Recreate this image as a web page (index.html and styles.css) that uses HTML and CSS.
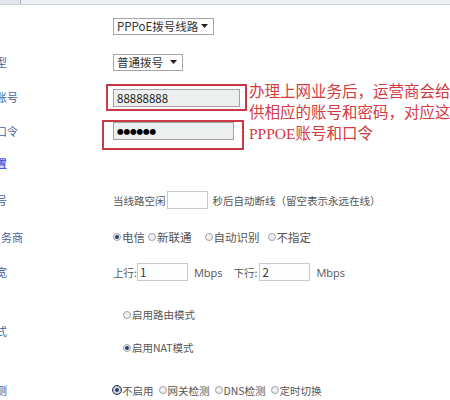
FILE: index.html
```html
<!DOCTYPE html>
<html>
<head>
<meta charset="utf-8">
<link rel="stylesheet" href="styles.css">
</head>
<body>
<div class="tabs"><div class="tab"></div></div>
<div class="form">
  <div class="row r1">
    <div class="lab"></div>
    <div class="val"><span class="sel sel-line">PPPoE拨号线路<svg class="arr" width="7" height="4" viewBox="0 0 7 4"><path d="M0 0H7L3.5 4Z" fill="#222"/></svg></span></div>
  </div>
  <div class="row r2">
    <div class="lab">型</div>
    <div class="val"><span class="sel sel-mode">普通拨号<svg class="arr" width="7" height="4" viewBox="0 0 7 4"><path d="M0 0H7L3.5 4Z" fill="#222"/></svg></span></div>
  </div>
  <div class="row r3">
    <div class="lab">账号</div>
    <div class="val"><span class="inp inp-acc">88888888</span></div>
  </div>
  <div class="row r4">
    <div class="lab">口令</div>
    <div class="val"><span class="inp inp-pwd">●●●●●●</span></div>
  </div>
  <div class="row r5">
    <div class="lab head">置</div>
    <div class="val"></div>
  </div>
  <div class="row r6">
    <div class="lab">号</div>
    <div class="val txt">当线路空闲<span class="box box-idle"></span><span class="gap6">秒后自动断线（留空表示永远在线）</span></div>
  </div>
  <div class="row r7">
    <div class="lab lab-wide">务商</div>
    <div class="val txt isp">
      <span class="opt"><span class="rd on"></span>电信</span>
      <span class="opt o2"><span class="rd"></span>新联通</span>
      <span class="opt o3"><span class="rd"></span>自动识别</span>
      <span class="opt o4"><span class="rd"></span>不指定</span>
    </div>
  </div>
  <div class="row r8">
    <div class="lab">宽</div>
    <div class="val txt">上行:<span class="box box-bw">1</span><span class="unit">Mbps</span><span class="down">下行:</span><span class="box box-bw">2</span><span class="unit">Mbps</span></div>
  </div>
  <div class="row r9">
    <div class="lab">式</div>
    <div class="val txt modes">
      <div class="mline"><span class="rd"></span>启用路由模式</div>
      <div class="mline"><span class="rd on"></span>启用NAT模式</div>
    </div>
  </div>
  <div class="row r10">
    <div class="lab">测</div>
    <div class="val txt opts-tight">
      <span class="opt"><span class="rd on focus"></span>不启用</span>
      <span class="opt"><span class="rd"></span>网关检测</span>
      <span class="opt"><span class="rd"></span>DNS检测</span>
      <span class="opt"><span class="rd"></span>定时切换</span>
    </div>
  </div>
</div>

<div class="mark mark-acc"></div>
<div class="mark mark-pwd"></div>
<div class="note">
  <div>办理上网业务后，运营商会给</div>
  <div>供相应的账号和密码，对应这</div>
  <div>PPPOE账号和口令</div>
</div>
</body>
</html>
```

FILE: styles.css
```css
html, body {
  margin: 0;
  padding: 0;
  background: #fff;
  width: 450px;
  height: 400px;
  overflow: hidden;
  position: relative;
}

body {
  font-family: "Noto Sans CJK SC", "Noto Sans", sans-serif;
  color: #555;
}

.tabs {
  height: 4px;
  background: #eef0f3;
  border-bottom: 1px solid #cfd5dc;
}

.tab {
  width: 20px;
  height: 4px;
  background: #e2e6eb;
  border-right: 1px solid #aeb6c0;
}

.form {
  margin-top: 3px;
}

.row {
  display: grid;
  grid-template-columns: 113px 1fr;
  align-items: center;
}

.r1 { height: 35px; }
.r2 { height: 38px; }
.r3 { height: 32px; }
.r4 { height: 36px; }
.r5 { height: 28px; }
.r6 { height: 46px; }
.r7 { height: 28px; }
.r8 { height: 42px; }
.r9 { height: 76px; }
.r10 { height: 42px; }

.lab {
  overflow: hidden;
  white-space: nowrap;
  font-size: 11px;
  color: #4a5f98;
  text-indent: -4px;
}

.lab-wide {
  text-indent: 1px;
}

.lab.head {
  color: #4f5bd8;
  font-weight: bold;
}

.val {
  display: flex;
  align-items: center;
  white-space: nowrap;
}

.txt {
  font-size: 10.5px;
  color: #555;
}

.sel {
  display: inline-flex;
  align-items: center;
  justify-content: space-between;
  box-sizing: border-box;
  height: 17px;
  border: 1px solid #a5a5a5;
  background: #fff;
  padding: 0 5px 0 3px;
  font-size: 11.5px;
  color: #333;
  line-height: 15px;
}

.sel-line { width: 101px; margin-top: 1px; }
.sel-mode { width: 70px; }

.arr { flex: none; }

.inp {
  display: inline-flex;
  align-items: center;
  box-sizing: border-box;
  height: 18px;
  border: 1px solid #a0a4a8;
  background: #eef0f0;
  padding: 0 3px;
  font-size: 11.5px;
  color: #222;
}

.inp-acc { width: 127px; margin-top: 1px; }
.inp-pwd { width: 121px; font-size: 6.5px; color: #000; }

.box {
  display: inline-flex;
  align-items: center;
  box-sizing: border-box;
  height: 18px;
  border: 1px solid #c9c9c9;
  background: #fdfdfd;
  padding: 0 2px;
  font-size: 11.5px;
  color: #333;
}

.box-idle { width: 41px; margin-left: 1px; }
.box-bw { width: 51px; }

.gap6 { margin-left: 5px; }

.unit { margin-left: 6px; font-family: "Open Sans", "Noto Sans", sans-serif; font-size: 11px; }
.down { margin-left: 11px; margin-right: 2px; }

.isp { font-size: 11.5px; }
.o2 { margin-left: 3px; }
.o3 { margin-left: 13px; }
.o4 { margin-left: 8px; }

.opts-tight { gap: 5px; }

.opt {
  display: inline-flex;
  align-items: center;
}

.rd {
  flex: none;
  position: relative;
  box-sizing: border-box;
  width: 8px;
  height: 8px;
  border-radius: 50%;
  border: 1px solid #9ea3a8;
  background: #eef0f2;
  margin-right: 1px;
}

.rd.on::after {
  content: "";
  position: absolute;
  left: 1px;
  top: 1px;
  width: 4px;
  height: 4px;
  border-radius: 50%;
  background: #2a3c78;
}

.rd.focus {
  outline: 1px solid #2a3550;
  outline-offset: 0;
}

.modes {
  flex-direction: column;
  align-items: flex-start;
  padding-left: 10px;
}

.mline {
  height: 33px;
  display: flex;
  align-items: center;
}

.mark {
  position: absolute;
  border: 2px solid #c93a44;
  box-sizing: border-box;
}

.mark-acc { left: 106px; top: 84px; width: 141px; height: 27px; }
.mark-pwd { left: 102px; top: 120px; width: 142px; height: 30px; }

.note {
  position: absolute;
  left: 249px;
  top: 81px;
  white-space: nowrap;
  font-family: "Liberation Serif", "Noto Sans CJK SC", serif;
  font-size: 15.5px;
  line-height: 21px;
  color: #d43a40;
}
```
